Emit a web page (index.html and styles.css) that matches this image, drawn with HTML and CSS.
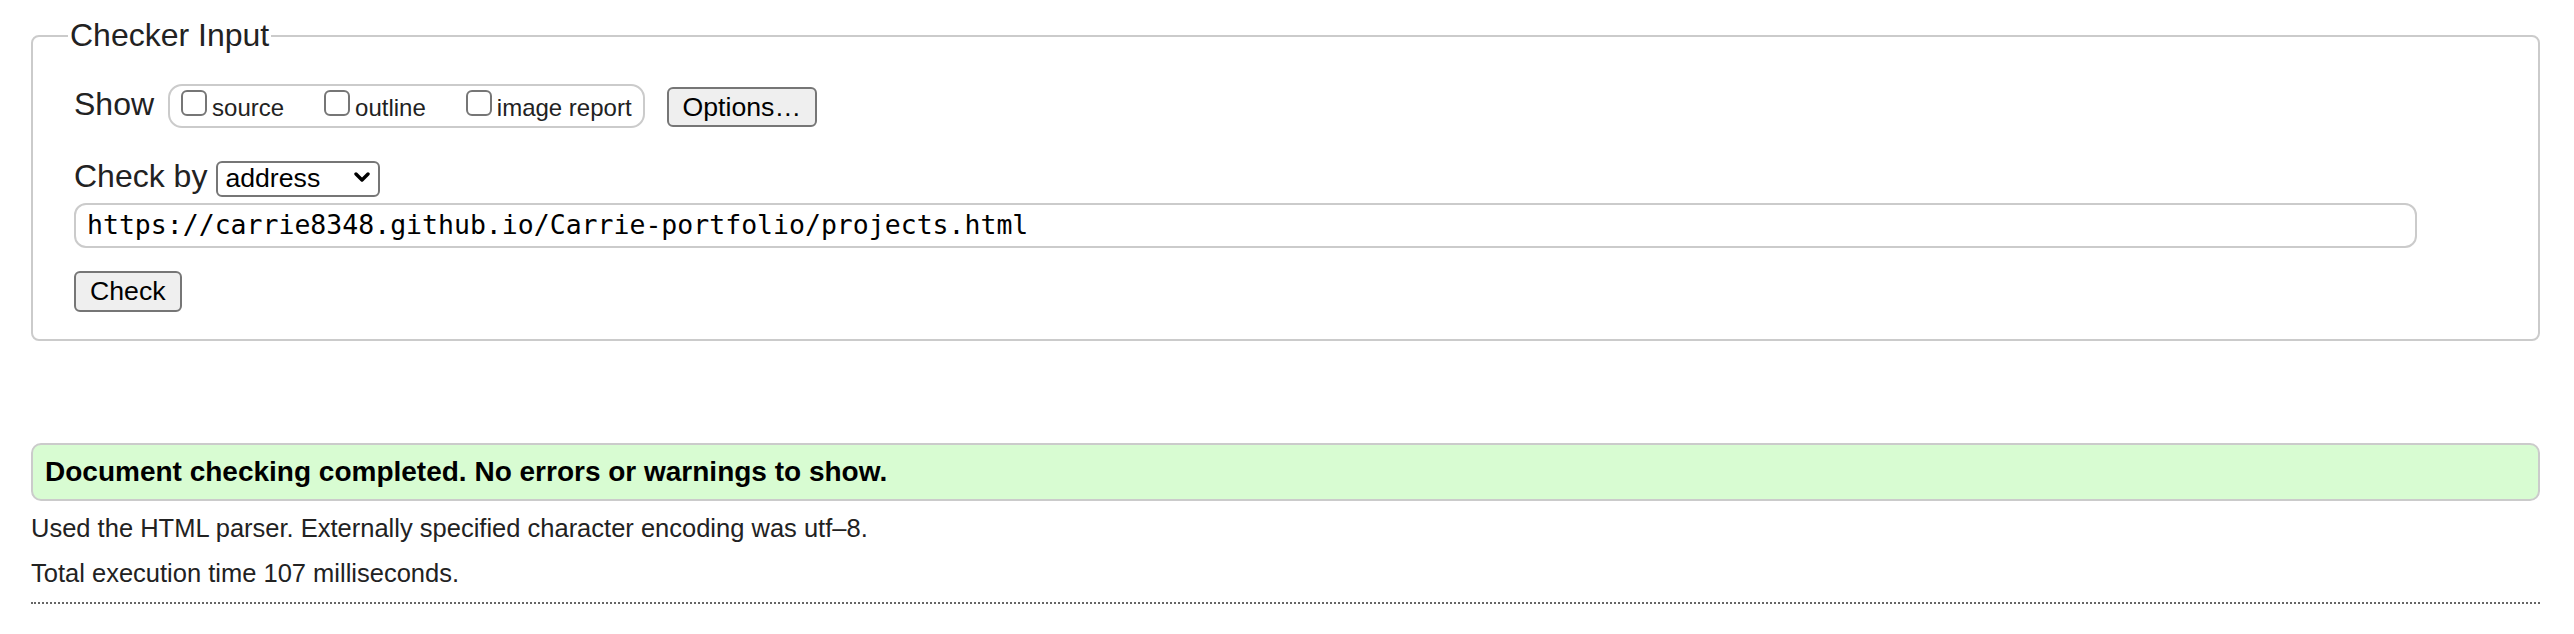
FILE: index.html
```html
<!DOCTYPE html>
<html lang="en">
<head>
<meta charset="utf-8">
<title>Nu Html Checker</title>
<link rel="stylesheet" href="styles.css">
</head>
<body>
<form class="form">
  <fieldset class="checker">
    <legend class="legend">Checker Input</legend>
    <div class="row row-show">
      <span class="lbl">Show</span>
      <div class="opts">
        <label class="opt"><input type="checkbox" class="cb"><span class="opt-text">source</span></label>
        <label class="opt"><input type="checkbox" class="cb"><span class="opt-text">outline</span></label>
        <label class="opt"><input type="checkbox" class="cb"><span class="opt-text">image report</span></label>
      </div>
      <button type="button" class="btn btn-options">Options…</button>
    </div>
    <div class="row row-by">
      <span class="lbl">Check by</span>
      <div class="sel-wrap">
        <select class="sel"><option>address</option></select>
        <svg class="chev" width="16" height="11" viewBox="0 0 16 11"><path d="M2 2 L8 8 L14 2" fill="none" stroke="#000" stroke-width="3.4" stroke-linecap="round" stroke-linejoin="round"/></svg>
      </div>
    </div>
    <input type="url" class="url" value="https://carrie8348.github.io/Carrie-portfolio/projects.html">
    <div class="row row-submit">
      <button type="button" class="btn btn-check">Check</button>
    </div>
  </fieldset>
</form>
<p class="success">Document checking completed. No errors or warnings to show.</p>
<p class="info">Used the HTML parser. Externally specified character encoding was utf–8.</p>
<p class="info">Total execution time 107 milliseconds.</p>
<hr class="dots">
</body>
</html>
```
FILE: styles.css
```css
html, body {
  margin: 0;
  padding: 0;
  background: #fff;
}
body {
  padding: 0 34px 0 31px;
  font-family: "Liberation Sans", Arial, sans-serif;
  color: #222;
}
.form {
  margin: 0;
}
.checker {
  margin: 17px 0 0 0;
  padding: 30px 40px 27px 41px;
  border: 2px solid #cbcbcb;
  border-radius: 8px;
  min-inline-size: 0;
}
.legend {
  font-size: 32px;
  line-height: 37px;
  padding: 0 2px;
  margin-left: -6px;
  color: #222;
}
.row {
  display: flex;
  align-items: flex-start;
}
.row-show {
  height: 44px;
}
.lbl {
  font-size: 32px;
  line-height: 37px;
  white-space: nowrap;
}
.row-show .lbl {
  margin-top: 2px;
}
.opts {
  box-sizing: border-box;
  height: 44px;
  margin-left: 14px;
  border: 2px solid #cbcbcb;
  border-radius: 14px;
  padding: 0 11px;
  display: flex;
  align-items: flex-start;
}
.opt {
  display: flex;
  align-items: flex-start;
}
.opt + .opt {
  margin-left: 40px;
}
.cb {
  appearance: none;
  -webkit-appearance: none;
  box-sizing: border-box;
  width: 26px;
  height: 26px;
  margin: 4px 5px 0 0;
  border: 2px solid #767676;
  border-radius: 6px;
  background: #fff;
}
.opt-text {
  font-size: 24px;
  line-height: 28px;
  margin-top: 8px;
  white-space: nowrap;
}
.btn {
  box-sizing: border-box;
  font-family: "Liberation Sans", Arial, sans-serif;
  font-size: 26.67px;
  color: #000;
  background: #efefef;
  border: 2px solid #767676;
  border-radius: 6px;
  padding: 0 14px;
  line-height: 1;
}
.btn-options {
  height: 40px;
  margin-left: 22px;
  margin-top: 3px;
}
.row-by {
  margin-top: 30px;
}
.sel-wrap {
  position: relative;
  margin-left: 9px;
  margin-top: 3px;
}
.sel {
  appearance: none;
  -webkit-appearance: none;
  box-sizing: border-box;
  display: block;
  width: 164px;
  height: 36px;
  border: 2px solid #767676;
  border-radius: 6px;
  background: #fff;
  color: #000;
  font-family: "Liberation Sans", Arial, sans-serif;
  font-size: 26.67px;
  padding: 0 0 2px 7px;
  line-height: 30px;
}
.chev {
  position: absolute;
  left: 138px;
  top: 11px;
  pointer-events: none;
}
.url {
  display: block;
  box-sizing: border-box;
  width: 2343px;
  height: 45px;
  margin-top: 6px;
  border: 2px solid #cbcbcb;
  border-radius: 12px;
  padding: 0 10px 2px 11px;
  font-family: "DejaVu Sans Mono", Menlo, monospace;
  font-size: 26.5px;
  color: #000;
  background: #fff;
}
.row-submit {
  margin-top: 23px;
}
.btn-check {
  height: 41px;
}
.success {
  box-sizing: border-box;
  margin: 102px 0 0 0;
  height: 58px;
  border: 2px solid #cbcbcb;
  border-radius: 10px;
  background: #d8fcd2;
  padding: 0 12px;
  font-weight: bold;
  font-size: 28px;
  line-height: 54px;
  color: #000;
}
.info {
  margin: 0;
  font-size: 25.5px;
  line-height: 45px;
  color: #222;
}
.success + .info {
  margin-top: 5px;
}
.dots {
  margin: 6px 0 0 0;
  height: 0;
  border: 0;
  border-top: 2px dotted #666;
}
```
